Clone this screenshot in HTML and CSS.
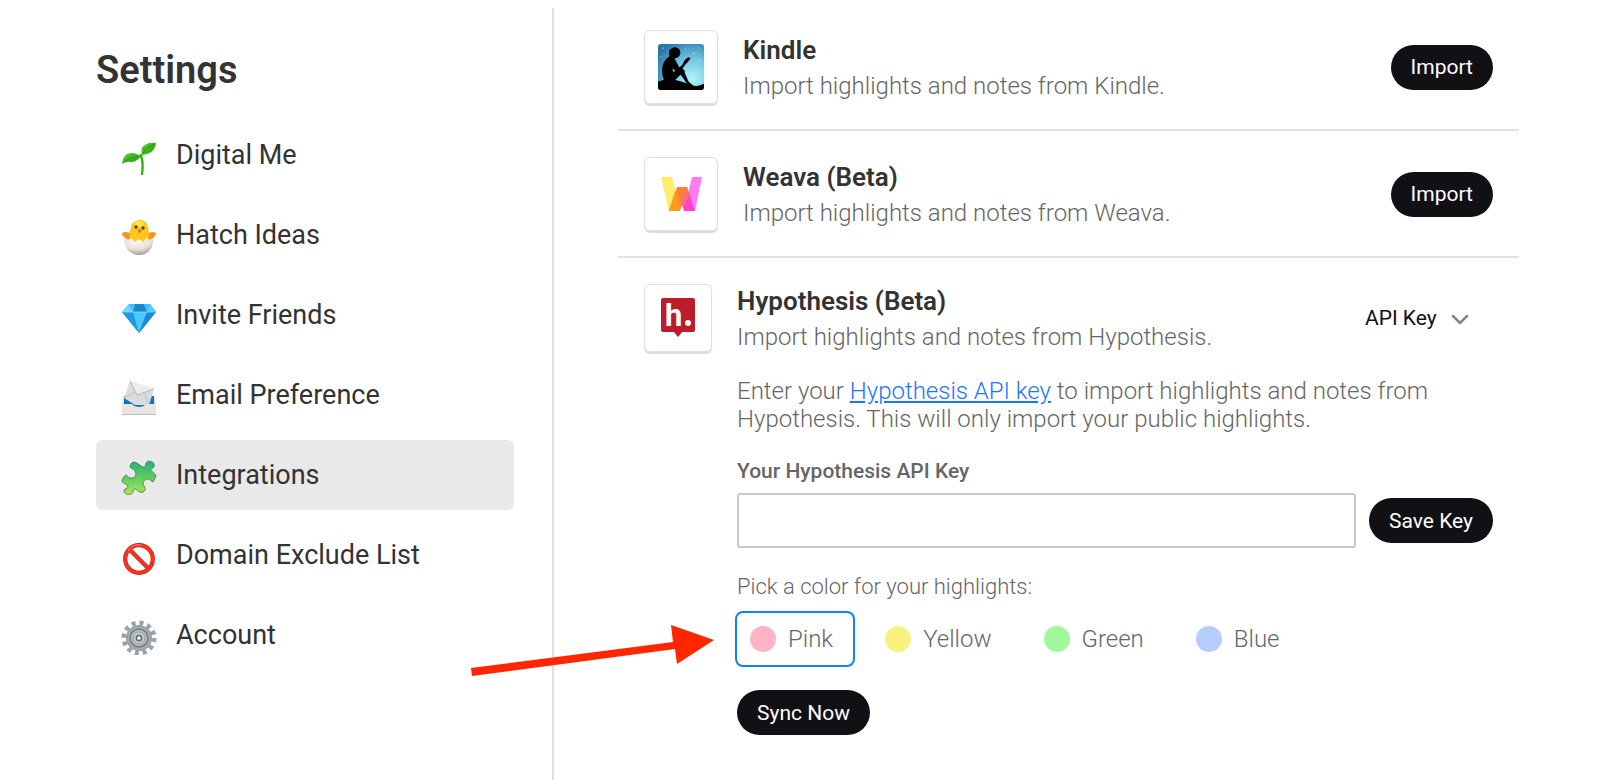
FILE: index.html
```html
<!DOCTYPE html>
<html lang="en">
<head>
    <meta charset="utf-8">
    <title>Settings - Integrations</title>
    <link rel="stylesheet" href="styles.css">
</head>
<body>
    <div class="page">
        <aside class="sidebar">
            <h1>Settings</h1>
            <nav class="menu">
                <a href="#digital-me" class="menu-item">
                    <svg class="menu-icon" viewBox="0 0 36 40">
                        <defs>
                            <linearGradient id="leaf" x1="0" y1="0" x2="1" y2="1">
                                <stop offset="0" stop-color="#5fd12c"/>
                                <stop offset="1" stop-color="#1f9a10"/>
                            </linearGradient>
                        </defs>
                        <path d="M20 20c2 6 2 12 1 19" fill="none" stroke="#35b312" stroke-width="2.4" stroke-linecap="round"/>
                        <path d="M1 29C2 21 6 18 11 18c4 0 6 2 9 3-3 4-6 6-10 6-4 0-6 0-9 2z" fill="url(#leaf)"/>
                        <path d="M35 8c-6-1-12 1-14 5-1 3 0 5 0 7 7-1 13-3 14-12z" fill="url(#leaf)"/>
                        <path d="M3 27c5-4 9-5 16-6M22 18c3-5 7-7 12-9" fill="none" stroke="#1c8a10" stroke-width=".7"/>
                    </svg>
                    Digital Me
                </a>
                <a href="#hatch-ideas" class="menu-item">
                    <svg class="menu-icon" viewBox="0 0 36 40">
                        <defs>
                            <radialGradient id="shell" cx=".45" cy=".2" r=".8">
                                <stop offset="0" stop-color="#fffdf8"/>
                                <stop offset=".6" stop-color="#e6e2da"/>
                                <stop offset="1" stop-color="#a39c90"/>
                            </radialGradient>
                        </defs>
                        <path d="M11 19c-3-2-7-3-10-1 0 2 1 3 2 4 1 2 3 3 6 3zM26 19c3-2 6-3 9-1 0 2-1 3-2 4-1 2-3 3-6 3z" fill="#fb9320"/>
                        <path d="M9 28c-1-8 0-13 1-16 1-5 5-7 9-7s7 2 8 7c1 4 1 8 0 16z" fill="#ffc61b"/>
                        <ellipse cx="18" cy="9" rx="5" ry="3" fill="#ffe14b"/>
                        <circle cx="15" cy="12" r="1.7" fill="#5a4432"/>
                        <circle cx="22" cy="13" r="1.7" fill="#5a4432"/>
                        <path d="M16.500 15l2-1 2 1-1.500 3h-1z" fill="#f2700c"/>
                        <path d="M3 22l4 3 3-2 4 4 4-3 4 3 3-4 4 2 3-2c1 10-5 17-14 17S2 32 3 22z" fill="url(#shell)"/>
                    </svg>
                    Hatch Ideas
                </a>
                <a href="#invite-friends" class="menu-item">
                    <svg class="menu-icon" viewBox="0 0 36 40">
                        <path d="M8 9h21l6 8-17 21L1 17z" fill="#27a9ee"/>
                        <path d="M8 9l4 8H1z" fill="#6fd6fb"/>
                        <path d="M14 9h9l3 8H12z" fill="#1588cf"/>
                        <path d="M8 9h6l-2 8zM29 9h-6l3 8z" fill="#3fc0f8"/>
                        <path d="M29 9l6 8h-9z" fill="#55cafa"/>
                        <path d="M1 17h11l6 21z" fill="#2099e4"/>
                        <path d="M12 17h14l-8 21z" fill="#4bc8fa"/>
                        <path d="M26 17h9L18 38z" fill="#168ad6"/>
                        <path d="M2 17h32" stroke="#9be6ff" stroke-width=".7"/>
                    </svg>
                    Invite Friends
                </a>
                <a href="#email" class="menu-item">
                    <svg class="menu-icon" viewBox="0 0 36 40">
                        <path d="M3 21h30v11H3z" fill="#0c76bd"/>
                        <path d="M9 6l24 8-5 16H14L3 23z" fill="#dcdcdc"/>
                        <path d="M9 6l7 14 17-6" fill="#ececec" stroke="#a9a9a9" stroke-width=".8"/>
                        <path d="M3 23l11-6M28 30l-5-13" fill="none" stroke="#b4b4b4" stroke-width=".7"/>
                        <path d="M1 29l2-9v9h8c1 2 3 3 7 3s6-1 7-3h8v-9l2 9v11H1z" fill="#dcdbd6"/>
                        <path d="M1 29h10c1 2 3 3 7 3s6-1 7-3h10v11H1z" fill="#e6e5e1"/>
                        <path d="M1 39h34v1H1z" fill="#bdbcb7"/>
                    </svg>
                    Email Preference
                </a>
                <a href="#integrations" class="menu-item active">
                    <svg class="menu-icon" viewBox="0 0 36 40">
                        <defs>
                            <linearGradient id="puzzle" x1="0" y1="0" x2="0" y2="1">
                                <stop offset="0" stop-color="#25b27a"/>
                                <stop offset=".5" stop-color="#5fcb62"/>
                                <stop offset="1" stop-color="#a9ec55"/>
                            </linearGradient>
                        </defs>
                        <path d="M12 7c4 0 6 3 10 5 3 1 2-2 3-4 2-3 7-2 8 1 1 3-1 4-3 5-1 2 4 4 5 7l-3 6c-2 0-2-3-5-3-4 0-6 4-4 7 1 2 2 3 1 4-1 2-3 3-5 2-3-1-4-4-6-3-2 2 0 4-3 5-3 1-7 0-7-3 0-3 4-2 4-4 0-3-5-3-6-6 0-2 2-5 4-6 2 1 3 4 6 3 3 0 5-4 3-7-1-2-4-2-5-4 0-2 1-4 3-5z" fill="url(#puzzle)" stroke="#3d7440" stroke-width=".8"/>
                    </svg>
                    Integrations
                </a>
                <a href="#domains" class="menu-item">
                    <svg class="menu-icon" viewBox="0 0 36 40">
                        <circle cx="18" cy="24" r="13.800" fill="#fff" stroke="#c81d0f" stroke-width="4.200"/>
                        <path d="M9 15l18 18" stroke="#c81d0f" stroke-width="4.200"/>
                        <circle cx="18" cy="24" r="13.800" fill="none" stroke="#f8321f" stroke-width="3"/>
                        <path d="M9 15l18 18" stroke="#f8321f" stroke-width="3"/>
                        <path d="M7 16c3-5 8-7 13-6" fill="none" stroke="#ff8d78" stroke-width="1"/>
                    </svg>
                    Domain Exclude List
                </a>
                <a href="#account" class="menu-item">
                    <svg class="menu-icon" viewBox="0 0 36 40">
                        <circle cx="18" cy="23" r="15" fill="none" stroke="#98a3aa" stroke-width="5" stroke-dasharray="4 3.854"/>
                        <circle cx="18" cy="23" r="12" fill="#a9b1b6" stroke="#98a3aa" stroke-width="2"/>
                        <circle cx="18" cy="23" r="9" fill="#b4bbc0" stroke="#737c82" stroke-width="1.500"/>
                        <circle cx="18" cy="23" r="6" fill="#c3cace" stroke="#98a1a7" stroke-width="1"/>
                        <circle cx="18" cy="23" r="2.600" fill="#fff" stroke="#5f676d" stroke-width="1.500"/>
                    </svg>
                    Account
                </a>
            </nav>
        </aside>

        <main class="content">
            <section class="integration">
                <div class="integration-header">
                    <div class="logo">
                        <svg width="46" height="46" viewBox="0 0 45 45">
                            <defs>
                                <radialGradient id="sky" cx=".75" cy=".75" r=".9">
                                    <stop offset="0" stop-color="#b4f3fc"/>
                                    <stop offset=".5" stop-color="#6cc3df"/>
                                    <stop offset="1" stop-color="#2b76a8"/>
                                </radialGradient>
                                <clipPath id="kindle-clip"><rect width="45" height="45" rx="3"/></clipPath>
                            </defs>
                            <g clip-path="url(#kindle-clip)">
                                <rect width="45" height="45" fill="url(#sky)"/>
                                <g fill="#d8f5ff">
                                    <circle cx="5" cy="4" r=".6"/><circle cx="27" cy="5" r=".5"/>
                                    <circle cx="35" cy="9" r=".6"/><circle cx="40" cy="4" r=".5"/>
                                    <circle cx="3" cy="12" r=".5"/><circle cx="41" cy="16" r=".5"/>
                                </g>
                                <circle cx="16.500" cy="8.500" r="5.400"/>
                                <path d="M11 5l0 8 5 1z"/>
                                <path d="M13 11C7 14 4 19 4 26c0 4 1 7 2 10h10l6-6 3 4 4 6 6 1-5-4-4-9c1-1-1-3-2-4l2-3c2-2 4-4 6-7l-2-1c-3 1-5 4-6 7l-3 3-4-7c-1-3-1-5-4-5zM14 24l3 2-2 2z"/>
                                <path d="M0 37c6-3 14-3 20-1 5 1 8 3 12 4 5 2 9 1 13-1v6H0z"/>
                            </g>
                        </svg>
                    </div>
                    <div class="integration-text">
                        <h2>Kindle</h2>
                        <p>Import highlights and notes from Kindle.</p>
                    </div>
                    <button type="button" class="btn">Import</button>
                </div>
            </section>

            <section class="integration">
                <div class="integration-header">
                    <div class="logo">
                        <svg width="41" height="34" viewBox="0 0 41 34">
                            <path d="M0 0h11l8 34H8z" fill="#ffec6b"/>
                            <path d="M31 0h10l-7 34H23z" fill="#ff7cf0"/>
                            <path d="M16 10h10l-7 24H8z" fill="#ff8a2a"/>
                            <path d="M16 10h10l8 24H23z" fill="#ff43cd"/>
                            <path d="M16 10h10l2 8-6 12-5-16z" fill="#ff7f2e"/>
                            <path d="M14 14l5 20H8z" fill="#ff9a1c"/>
                            <path d="M22 30l-2-6 4-10 3 6z" fill="#ff6a86"/>
                        </svg>
                    </div>
                    <div class="integration-text">
                        <h2>Weava (Beta)</h2>
                        <p>Import highlights and notes from Weava.</p>
                    </div>
                    <button type="button" class="btn">Import</button>
                </div>
            </section>

            <section class="integration hypothesis">
                <div class="integration-header">
                    <div class="logo logo-small">
                        <svg width="34" height="40" viewBox="0 0 34 40">
                            <path d="M2 0h30a2 2 0 0 1 2 2v30a2 2 0 0 1-2 2H21l-4 5-4-5H2a2 2 0 0 1-2-2V2a2 2 0 0 1 2-2z" fill="#bd1c2b"/>
                            <text x="4" y="28" class="logo-letter">h</text>
                            <circle cx="27" cy="25" r="3" fill="#fff"/>
                        </svg>
                    </div>
                    <div class="integration-text">
                        <h2>Hypothesis (Beta)</h2>
                        <p>Import highlights and notes from Hypothesis.</p>
                    </div>
                    <div class="method">
                        <select aria-label="Import method">
                            <option>API Key</option>
                        </select>
                        <svg class="chevron" viewBox="0 0 18 12">
                            <path d="M2 2l7 7 7-7" fill="none" stroke="#858585" stroke-width="2.500" stroke-linecap="round" stroke-linejoin="round"/>
                        </svg>
                    </div>
                </div>

                <form class="details">
                    <p class="help">Enter your <a href="#api-key">Hypothesis API key</a> to import highlights and notes from Hypothesis. This will only import your public highlights.</p>

                    <label class="key-label" for="api-key">Your Hypothesis API Key</label>
                    <div class="key-row">
                        <input type="text" id="api-key" name="api_key">
                        <button type="button" class="btn">Save Key</button>
                    </div>

                    <p class="pick" id="pick-color">Pick a color for your highlights:</p>
                    <div class="colors" role="radiogroup" aria-labelledby="pick-color">
                        <label class="color">
                            <input type="radio" name="color" value="pink" class="pink" checked>Pink
                            <svg class="arrow" viewBox="0 0 246 44">
                                <path d="M0 43L202 17l-2-17 43 15-37 24-2-15L1 51z" fill="#ff2600"/>
                            </svg>
                        </label>
                        <label class="color"><input type="radio" name="color" value="yellow" class="yellow">Yellow</label>
                        <label class="color"><input type="radio" name="color" value="green" class="green">Green</label>
                        <label class="color"><input type="radio" name="color" value="blue" class="blue">Blue</label>
                    </div>

                    <button type="button" class="btn">Sync Now</button>
                </form>
            </section>
        </main>
    </div>
</body>
</html>
```
FILE: styles.css
```css
* {
    box-sizing: border-box;
}
body {
    margin: 0;
    background: #fff;
    color: #333;
    font-family: Roboto, sans-serif;
}
h1, h2, p {
    margin: 0;
}
.page {
    display: flex;
    min-height: 100vh;
}

/* sidebar */
.sidebar {
    flex: none;
    width: 554px;
    margin-top: 8px;
    padding: 38px 38px 0 96px;
    border-right: 2px solid #e0e0e0;
}
h1 {
    margin-bottom: 26px;
    font-size: 38px;
    font-weight: 600;
    line-height: 48px;
}
.menu {
    display: flex;
    flex-direction: column;
    gap: 10px;
}
.menu-item {
    display: flex;
    align-items: center;
    gap: 19px;
    height: 70px;
    padding: 0 25px;
    border-radius: 6px;
    color: #333;
    font-size: 27px;
    text-decoration: none;
}
.menu-item.active {
    background: #e9e9e9;
}
.menu-icon {
    width: 36px;
    height: 40px;
}

/* integrations */
.content {
    flex: 1;
    padding: 4px 81px 24px 64px;
}
.integration {
    padding: 26px 26px 25px;
    border-bottom: 2px solid #e3e3e3;
}
.integration:last-child {
    border-bottom: none;
}
.hypothesis {
    padding-top: 24px;
}
.integration-header {
    display: flex;
    align-items: center;
    gap: 25px;
}
.integration-text {
    flex: 1;
}
.logo {
    display: flex;
    align-items: center;
    justify-content: center;
    width: 74px;
    height: 74px;
    border: 1px solid #dedede;
    border-radius: 6px;
    box-shadow: 0 2px 1px #dadada;
}
.logo-small {
    width: 68px;
    height: 68px;
}
.logo-letter {
    fill: #fff;
    font-size: 31px;
    font-weight: 700;
}
h2 {
    font-size: 26px;
    font-weight: 600;
    line-height: 38px;
}
.integration-text p {
    color: #666;
    font-size: 24px;
    font-weight: 350;
    line-height: 34px;
}
.btn {
    height: 45px;
    padding: 0 20px;
    border: none;
    border-radius: 23px;
    background: #111015;
    color: #fff;
    font-family: inherit;
    font-size: 21px;
    font-weight: 400;
}
.method {
    position: relative;
    padding-right: 24px;
}
.method select {
    appearance: none;
    padding: 0 32px 0 0;
    border: none;
    background: none;
    color: #111;
    font-family: inherit;
    font-size: 21px;
    font-weight: 400;
}
.chevron {
    position: absolute;
    top: 8px;
    right: 24px;
    width: 18px;
    height: 12px;
    pointer-events: none;
}

/* hypothesis form */
.details {
    margin: 23px 0 0 93px;
}
.help {
    color: #666;
    font-size: 24px;
    font-weight: 350;
    line-height: 28px;
}
.help a {
    color: #1976ff;
}
.key-label {
    display: block;
    margin: 26px 0 10px;
    color: #666;
    font-size: 21px;
    font-weight: 500;
    line-height: 24px;
}
.key-row {
    display: flex;
    align-items: center;
    gap: 13px;
}
.key-row input {
    flex: 1;
    min-width: 0;
    height: 55px;
    padding: 0 12px;
    border: 2px solid #c8c8c8;
    border-radius: 3px;
    font-family: inherit;
    font-size: 22px;
}
.pick {
    margin: 25px 0 10px;
    color: #666;
    font-size: 22px;
    font-weight: 350;
    line-height: 28px;
}
.colors {
    display: flex;
    gap: 15px;
    margin: 0 0 23px -2px;
}
.color {
    position: relative;
    display: flex;
    align-items: center;
    gap: 12px;
    height: 56px;
    padding: 0 20px 0 13px;
    border: 2px solid transparent;
    border-radius: 8px;
    color: #666;
    font-size: 24px;
    font-weight: 350;
}
.color:has(:checked) {
    border-color: #0a84ff;
}
.color input {
    appearance: none;
    width: 26px;
    height: 26px;
    margin: 0;
    border-radius: 50%;
}
.pink {
    background: #ffb3c4;
}
.yellow {
    background: #f8f27e;
}
.green {
    background: #a1f99e;
}
.blue {
    background: #b6cdff;
}

/* pointer to the selected color */
.arrow {
    position: absolute;
    top: 12px;
    right: 100%;
    width: 246px;
    height: 44px;
    margin-right: 20px;
    overflow: visible;
}
```
